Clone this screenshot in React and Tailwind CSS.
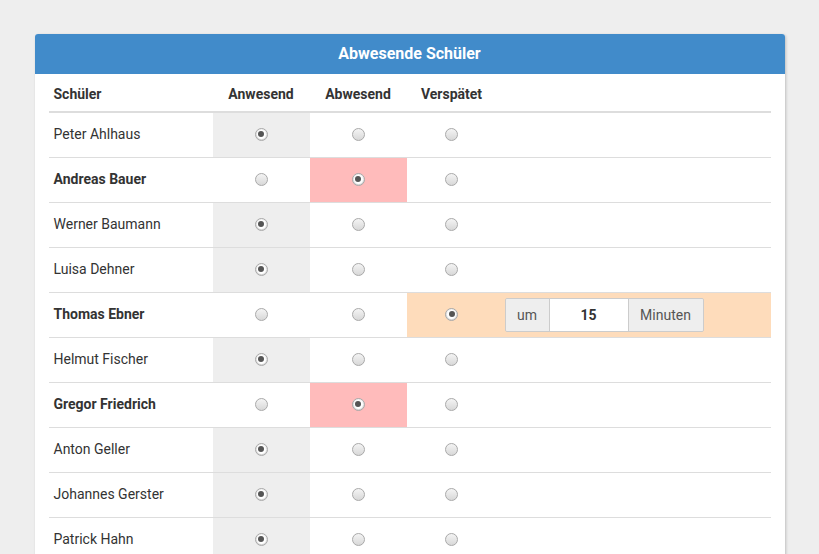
import React from 'react'

const students = [
  { name: "Peter Ahlhaus", status: "an" },
  { name: "Andreas Bauer", status: "ab" },
  { name: "Werner Baumann", status: "an" },
  { name: "Luisa Dehner", status: "an" },
  { name: "Thomas Ebner", status: "sp", minutes: 15 },
  { name: "Helmut Fischer", status: "an" },
  { name: "Gregor Friedrich", status: "ab" },
  { name: "Anton Geller", status: "an" },
  { name: "Johannes Gerster", status: "an" },
  { name: "Patrick Hahn", status: "an" },
]

function Radio({ checked }) {
  return (
    <span className="inline-flex items-center justify-center w-[13px] h-[13px] rounded-full border border-[#a9a9a9] bg-gradient-to-b from-[#f4f4f4] to-[#d8d8d8]">
      {checked ? (
        <span className="w-[9px] h-[9px] rounded-full bg-white flex items-center justify-center">
          <span className="w-[6px] h-[6px] rounded-full bg-[#555555]"></span>
        </span>
      ) : null}
    </span>
  )
}

function Row({ s }) {
  const absent = s.status === "ab"
  const late = s.status === "sp"
  return (
    <div className="flex h-[45px] border-b border-[#dddddd] text-[14px] text-[#333333]">
      <div className={"w-[164px] pl-[5px] pb-[2px] flex items-center " + (s.status !== "an" ? "font-bold" : "")}>{s.name}</div>
      <div className={"w-[97px] pb-[2px] flex items-center justify-center " + (s.status === "an" ? "bg-[#eeeeee]" : "")}>
        <Radio checked={s.status === "an"} />
      </div>
      <div className={"w-[97px] pb-[2px] flex items-center justify-center " + (absent ? "bg-[#ffbbbb]" : "")}>
        <Radio checked={absent} />
      </div>
      <div className={"flex-1 flex items-center " + (late ? "bg-[#fedcbb]" : "")}>
        <div className="w-[90px] pb-[2px] flex items-center justify-center">
          <Radio checked={late} />
        </div>
        {late ? (
          <div className="ml-[8px] flex h-[34px] border border-[#cccccc] rounded-[2px] overflow-hidden">
            <div className="w-[44px] bg-[#eeeeee] border-r border-[#cccccc] flex items-center justify-center text-[#555555]">um</div>
            <div className="w-[78px] bg-white flex items-center justify-center font-bold text-[#333333]">{s.minutes}</div>
            <div className="w-[75px] bg-[#eeeeee] border-l border-[#cccccc] flex items-center justify-center text-[#555555]">Minuten</div>
          </div>
        ) : null}
      </div>
    </div>
  )
}

export default function App() {
  return (
    <div className="bg-[#eeeeee] pt-[34px] overflow-hidden h-[554px]" style={{ fontFamily: "Roboto, 'Liberation Sans', sans-serif" }}>
      <div className="w-[750px] mx-auto bg-white rounded-t-[3px] shadow-[1px_1px_3px_rgba(0,0,0,0.2)]">
        <div className="h-[40px] bg-[#418bca] rounded-t-[3px] flex items-center justify-center text-white font-bold text-[16px]">
          Abwesende Schüler
        </div>
        <div className="px-[14px] pb-[20px]">
          <div className="flex h-[39px] pt-[4px] border-b-2 border-[#dddddd] text-[14px] font-bold text-[#333333]">
            <div className="w-[164px] pl-[5px] flex items-center">Schüler</div>
            <div className="w-[97px] flex items-center justify-center">Anwesend</div>
            <div className="w-[97px] flex items-center justify-center">Abwesend</div>
            <div className="w-[90px] flex items-center justify-center">Verspätet</div>
            <div className="flex-1"></div>
          </div>
          {students.map((s) => (
            <Row key={s.name} s={s} />
          ))}
        </div>
      </div>
    </div>
  )
}
